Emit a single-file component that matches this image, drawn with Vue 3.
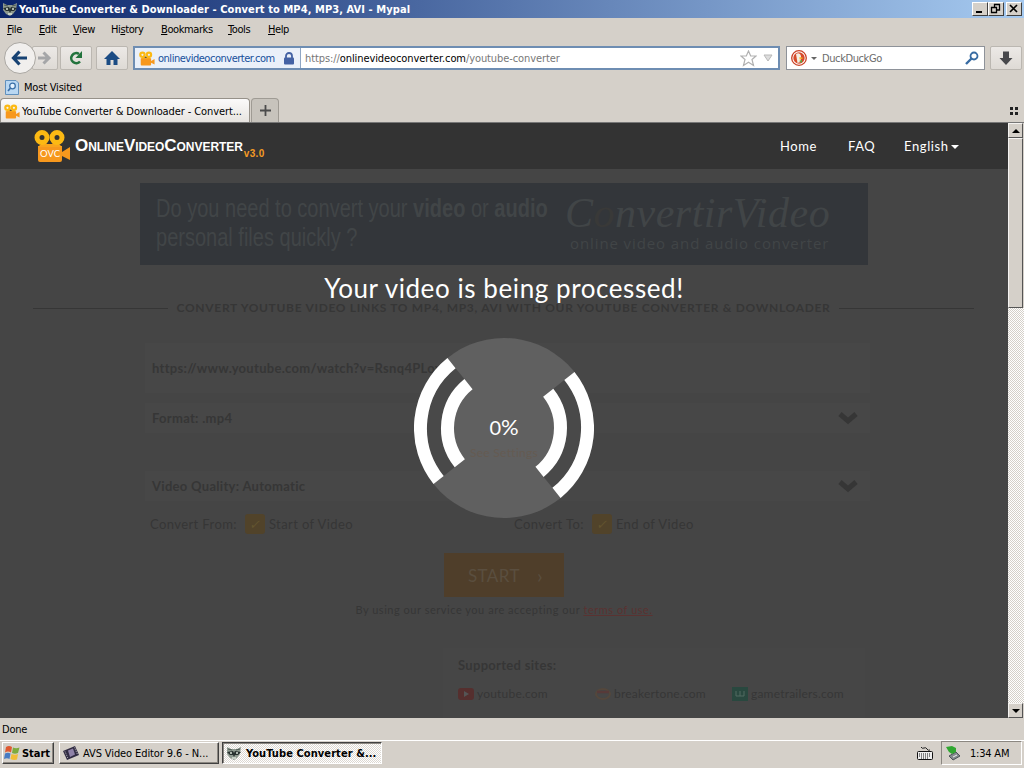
<script setup>
const menus = [
  { pre: '', key: 'F', post: 'ile', width: 32 },
  { pre: '', key: 'E', post: 'dit', width: 34 },
  { pre: '', key: 'V', post: 'iew', width: 38 },
  { pre: 'Hi', key: 's', post: 'tory', width: 50 },
  { pre: '', key: 'B', post: 'ookmarks', width: 67 },
  { pre: '', key: 'T', post: 'ools', width: 40 },
  { pre: '', key: 'H', post: 'elp', width: 40 },
]

const arcs = [
  { d: 'M-44 -54.4A70 70 0 0 0 -54.8 43.6', color: '#494949', size: 14 },
  { d: 'M-52.5 -64.9A83.5 83.5 0 0 0 -65.4 52', color: '#fff', size: 13 },
  { d: 'M-35.5 -43.9A56.5 56.5 0 0 0 -44.2 35.2', color: '#fff', size: 13 },
]
</script>

<template>
  <div class="screen">
    <svg class="defs" width="0" height="0">
      <symbol id="camera" viewBox="0 0 37 34">
        <path d="M4 17H28V23L36 18V31L28 27V31Q28 33 26 33H6Q4 33 4 31Z" fill="#f7981d" />
        <path d="M8 14H24L28 18H4Z" fill="#f9a51c" />
        <path d="M12 15L15.500 12L19 15Z" fill="#333" />
        <circle cx="8" cy="8.500" r="5" fill="none" stroke="#fcb913" stroke-width="5" />
        <circle cx="23" cy="8.500" r="5" fill="none" stroke="#fcb913" stroke-width="5" />
      </symbol>
      <symbol id="raccoon" viewBox="0 0 16 16">
        <path d="M1 2L5 4H11L15 2L14 9L11 13L8 15L4 13L1 9Z" fill="#8d998f" />
        <path d="M1 7L7 6L8 8L9 6L15 7L12 10H9L8 12L7 10H4Z" fill="#27312f" />
        <path d="M4 8H6M10 8H12M6 13H10" stroke="#d9e2d7" stroke-width="1.3" />
        <path d="M2 4L6 5M14 4L10 5" stroke="#4f5c54" />
      </symbol>
    </svg>

    <header class="titlebar">
      <svg width="16" height="16"><use href="#raccoon" /></svg>
      <span class="title">YouTube Converter &amp; Downloader - Convert to MP4, MP3, AVI - Mypal</span>
      <div class="window-btns">
        <i><svg width="13" height="11"><path d="M3 9H9" stroke="#000" stroke-width="2" /></svg></i>
        <i><svg width="13" height="11"><path d="M5 1.5H11M5.500 1V4M10.500 1V7H8M2 4.500H8M2.500 4V9.500H7.500V4" fill="none" stroke="#000" stroke-width="1.300" /></svg></i>
        <i class="close"><svg width="13" height="11"><path d="M3 2L10 9M10 2L3 9" stroke="#000" stroke-width="1.7" /></svg></i>
      </div>
    </header>

    <nav class="menubar">
      <span v-for="m in menus" :key="m.key + m.post" :style="{ width: m.width + 'px' }">{{ m.pre }}<u>{{ m.key }}</u>{{ m.post }}</span>
    </nav>

    <div class="toolbar">
      <div class="back">
        <svg width="30" height="30" viewBox="0 0 30 30"><path d="M8.500 15H22M14.500 8.500L8.500 15L14.500 21.500" fill="none" stroke="#174273" stroke-width="3.200" /></svg>
      </div>
      <div class="tool forward">
        <svg width="22" height="22" viewBox="0 0 22 22"><path d="M4 11H14M9.500 5.500L15 11L9.500 16.500" fill="none" stroke="#a5a6a8" stroke-width="3" /></svg>
      </div>
      <div class="tool reload">
        <svg width="16" height="16" viewBox="0 0 16 16"><path d="M12 11.500A5 5 0 1 1 11 4" fill="none" stroke="#23733d" stroke-width="2.600" /><path d="M14 1V8H7.500Z" fill="#23733d" /></svg>
      </div>
      <div class="tool home">
        <svg width="16" height="16" viewBox="0 0 16 16"><path d="M8 1L16 9H13.500V15H9.500V10H6.500V15H2.500V9H0Z" fill="#1c4c84" /></svg>
      </div>
      <div class="urlbar">
        <div class="identity">
          <svg width="16" height="15"><use href="#camera" /></svg>
          <span>onlinevideoconverter.com</span>
          <svg width="12" height="13" viewBox="0 0 12 13"><path d="M3 6V4A3 3 0 0 1 9 4V6" fill="none" stroke="#4462a4" stroke-width="1.800" /><rect x="1" y="5.500" width="10" height="7" rx="1" fill="#4462a4" /></svg>
        </div>
        <div class="url">https://<b>onlinevideoconverter.com</b>/youtube-converter</div>
        <svg class="star" width="17" height="17" viewBox="0 0 17 17"><path d="M8.500 1L10.700 6H16L12 9.500L13.500 15.500L8.500 12.300L3.500 15.500L5 9.500L1 6H6.300Z" fill="#fff" stroke="#b1b1b1" stroke-width="1.200" /></svg>
        <svg class="drop" width="10" height="8" viewBox="0 0 10 8"><path d="M1 1H9L5 7Z" fill="#ddd" stroke="#b9b9b9" /></svg>
      </div>
      <div class="search">
        <svg width="16" height="16" viewBox="0 0 16 16"><circle cx="8" cy="8" r="7.300" fill="#fff" stroke="#ca4125" stroke-width="1.300" /><circle cx="8" cy="8" r="5.700" fill="#d64b2b" /><path d="M5 4Q9 2 10 6L9.500 12L6.500 13Z" fill="#f5eee2" /><path d="M8.500 7L12.500 8L8.500 9.500Z" fill="#f5bd2d" /><path d="M8 11L11 10V13Z" fill="#58a944" /></svg>
        <svg class="caret" width="6" height="3" viewBox="0 0 6 3"><path d="M0 0H6L3 3Z" fill="#666" /></svg>
        <span>DuckDuckGo</span>
        <svg width="14" height="14" viewBox="0 0 14 14"><circle cx="9" cy="5" r="3.500" fill="none" stroke="#376ba2" stroke-width="1.800" /><path d="M6.500 7.500L1 13" stroke="#376ba2" stroke-width="2.400" /></svg>
      </div>
      <div class="tool download">
        <svg width="14" height="15" viewBox="0 0 14 15"><path d="M4 0.500H10V7H13.500L7 14L0.500 7H4Z" fill="#48494c" /></svg>
      </div>
    </div>

    <div class="bookmarks">
      <svg width="14" height="15" viewBox="0 0 14 15"><path d="M.5 .5H11L13.500 3V14.500H.5Z" fill="#b9d7f2" stroke="#6190bd" /><circle cx="7.500" cy="6" r="2.800" fill="#e5f3ff" stroke="#3b70a8" stroke-width="1.300" /><path d="M5.500 8L3 11" stroke="#3b70a8" stroke-width="1.700" /></svg>
      <span>Most Visited</span>
    </div>

    <div class="tabs">
      <div class="tab">
        <svg width="16" height="15"><use href="#camera" /></svg>
        <span>YouTube Converter &amp; Downloader - Convert...</span>
      </div>
      <div class="new-tab">
        <svg width="11" height="11"><path d="M5.500 0V11M0 5.500H11" stroke="#4b4b4b" stroke-width="1.800" /></svg>
      </div>
      <svg class="tab-grid" width="9" height="9"><path d="M1 1.500H4M6 1.500H9M1 6.500H4M6 6.500H9" stroke="#222" stroke-width="3" /></svg>
    </div>

    <div class="viewport">
      <main class="page">
        <div class="site-header">
          <div class="logo">
            <svg width="37" height="34"><use href="#camera" /><text x="6" y="27.500" class="ovc">OVC</text></svg>
            <span class="brand">OnlineVideoConverter</span>
            <span class="version">v3.0</span>
          </div>
          <div class="site-nav">
            <span>Home</span>
            <span>FAQ</span>
            <span>English<i></i></span>
          </div>
        </div>

        <div class="content">
          <div class="banner">
            <p class="pitch">
              <span>Do you need to convert your <b>video</b> or <b>audio</b></span>
              <span>personal files quickly ?</span>
            </p>
            <div class="convertir">
              <em>C<span>o</span>nvertirVideo</em>
              <span class="tagline">online video and audio converter</span>
            </div>
          </div>

          <div class="heading">
            <hr>
            <h1>CONVERT YOUTUBE VIDEO LINKS TO MP4, MP3, AVI WITH OUR YOUTUBE CONVERTER &amp; DOWNLOADER</h1>
            <hr>
          </div>

          <div class="form">
            <div class="field link"><span>https://www.youtube.com/watch?v=Rsnq4PLoveks</span></div>
            <div class="field format">
              <span>Format: .mp4</span>
              <svg width="20" height="14" viewBox="0 0 20 14"><path d="M2 3L10 10L18 3" fill="none" stroke="#363636" stroke-width="5" /></svg>
            </div>
            <div class="field quality">
              <span>Video Quality: Automatic</span>
              <svg width="20" height="14" viewBox="0 0 20 14"><path d="M2 3L10 10L18 3" fill="none" stroke="#363636" stroke-width="5" /></svg>
            </div>
            <div class="range">
              <div class="from"><span class="label">Convert From:</span><i>✓</i><span>Start of Video</span></div>
              <div class="to"><span class="label">Convert To:</span><i>✓</i><span>End of Video</span></div>
            </div>
          </div>

          <div class="start"><span>START</span><small>›</small></div>
          <p class="terms">By using our service you are accepting our <u>terms of use.</u></p>

          <div class="sites">
            <h2>Supported sites:</h2>
            <div class="site-list">
              <div><svg width="16" height="14" viewBox="0 0 16 14"><rect y="1" width="16" height="12" rx="3" fill="#552f2e" /><path d="M6 4L11 7L6 10Z" fill="#555" /></svg><span>youtube.com</span></div>
              <div><svg width="16" height="14" viewBox="0 0 16 14"><ellipse cx="8" cy="7" rx="7" ry="5" fill="none" stroke="#54473c" stroke-width="2" /><path d="M2 5H14" stroke="#573a39" stroke-width="2.500" /></svg><span>breakertone.com</span></div>
              <div><svg width="16" height="14"><rect width="16" height="14" fill="#29483f" /><path d="M4 4V9H12V4M8 4V9" fill="none" stroke="#526b62" /></svg><span>gametrailers.com</span></div>
            </div>
          </div>
        </div>

        <div class="overlay">
          <h3>Your video is being processed!</h3>
          <div class="progress">
            <svg width="180" height="180" viewBox="-90 -90 180 180">
              <circle r="90" fill="#606060" />
              <g v-for="turn in [0, 180]" :key="turn" :transform="`rotate(${turn})`">
                <path v-for="a in arcs" :key="a.d" :d="a.d" :stroke="a.color" :stroke-width="a.size" fill="none" />
              </g>
            </svg>
            <div class="progress-text">
              <span class="percent"><small>0</small>%</span>
              <span class="settings">See Settings</span>
            </div>
          </div>
        </div>
      </main>

      <aside class="scrollbar">
        <i><svg width="8" height="4"><path d="M4 0L8 4H0Z" /></svg></i>
        <div class="thumb"></div>
        <div class="track"></div>
        <i><svg width="8" height="4"><path d="M0 0H8L4 4Z" /></svg></i>
      </aside>
    </div>

    <div class="status">Done</div>

    <footer class="taskbar">
      <div class="start-menu">
        <svg width="16" height="16" viewBox="0 0 16 16"><path d="M2 2Q5 0 8 2L7 7.500Q4 5.500 1 7.500Z" fill="#df5931" /><path d="M9 2.500Q12 4 15.500 2.500L14 8Q11 9.500 8 8Z" fill="#7dab3d" /><path d="M1 8.500Q4 7 6.500 8.500L5.500 14Q3 12.500 0 14Z" fill="#477bc3" /><path d="M7.500 9Q11 10.500 14 9L13 14.500Q10 15.500 6.500 14Z" fill="#f1bd36" /></svg>
        <b>Start</b>
      </div>
      <div class="task avs">
        <svg width="16" height="16" viewBox="0 0 16 16"><path d="M0 6L12 1L16 10L4 15Z" fill="#312c43" /><path d="M5 5.500L10 3.500L12 9.500L7 12Z" fill="#8f82a8" /><path d="M2 6.500L5 13.500M11.500 2.500L14.500 9.500" stroke="#b4afb8" stroke-dasharray="1 1" /></svg>
        <span>AVS Video Editor 9.6 - N...</span>
      </div>
      <div class="task active">
        <svg width="16" height="16"><use href="#raccoon" /></svg>
        <b>YouTube Converter &amp;...</b>
      </div>
      <svg class="keyboard" width="16" height="15" viewBox="0 0 16 15"><path d="M4 1Q5 3 7 2T10 3T13 4" fill="none" stroke="#222" /><rect x=".5" y="5.500" width="15" height="8" rx="1" fill="#eee" stroke="#111" /><path d="M2 8H14M2 10H14M4 12H12" stroke="#111" stroke-dasharray="1 1" /></svg>
      <div class="tray">
        <svg width="16" height="16" viewBox="0 0 16 16"><path d="M4 11L11 7L15 11L8 15Z" fill="#858b8e" stroke="#4b5457" /><path d="M1 2L7 1L11 3V7L7 9L4 7Z" fill="#30a731" /><path d="M8 12L12 10" stroke="#eee" /></svg>
        <span>1:34 AM</span>
      </div>
    </footer>
  </div>
</template>

<style>
body {
  margin: 0;
  overflow: hidden;
}
</style>

<style scoped>
.screen {
  width: 1024px;
  height: 768px;
  display: flex;
  flex-direction: column;
  overflow: hidden;
  background: #d5d0c9;
  font: 11px 'DejaVu Sans Condensed', 'DejaVu Sans', sans-serif;
  font-stretch: condensed;
  letter-spacing: -0.4px;
  color: #000;
  white-space: nowrap;
}

.screen * {
  box-sizing: border-box;
}

.defs {
  position: absolute;
}

svg {
  flex: none;
  display: block;
}

.titlebar {
  height: 18px;
  flex: none;
  display: flex;
  align-items: center;
  padding: 0 2px;
  background: linear-gradient(90deg, #0a246a, #a6caf0);
  color: #fff;
}

.title {
  margin-left: 1px;
  font-weight: bold;
  letter-spacing: 0.08px;
}

.window-btns {
  display: flex;
  margin-left: auto;
}

.window-btns i {
  width: 16px;
  height: 14px;
  border: 1px solid;
  border-color: #fff #404040 #404040 #fff;
  background: #d5d0c9;
}

.window-btns .close {
  margin-left: 2px;
}

.menubar {
  height: 23px;
  flex: none;
  display: flex;
  align-items: center;
  padding-left: 7px;
}

.toolbar {
  height: 34px;
  flex: none;
  display: flex;
  align-items: center;
}

.back {
  width: 32px;
  height: 32px;
  flex: none;
  margin-left: 4px;
  border: 1px solid #aaa7a2;
  border-radius: 50%;
  background: #f1efed;
  z-index: 1;
}

.tool {
  height: 24px;
  flex: none;
  display: flex;
  align-items: center;
  justify-content: center;
  border: 1px solid #bbb7b1;
  border-radius: 2px;
  background: linear-gradient(#ece9e6, #dedad5);
}

.forward {
  width: 26px;
  margin-left: -4px;
}

.reload {
  width: 32px;
  margin-left: 2px;
}

.home {
  width: 32px;
  margin-left: 4px;
}

.urlbar {
  width: 647px;
  height: 24px;
  display: flex;
  align-items: center;
  margin-left: 5px;
  border: 2px solid #6e8db2;
  background: #fff;
}

.identity {
  width: 166px;
  height: 20px;
  flex: none;
  display: flex;
  align-items: center;
  padding-left: 4px;
  border-right: 1px solid #8fa6c4;
  background: #eaf0f9;
  color: #174f9c;
}

.identity span {
  width: 125px;
  margin-left: 3px;
  letter-spacing: -0.48px;
}

.url {
  margin-left: 4px;
  color: #777;
  letter-spacing: -0.09px;
}

.url b {
  color: #000;
  font-weight: normal;
}

.star {
  margin-left: auto;
}

.drop {
  margin: 0 5px 0 6px;
}

.search {
  width: 199px;
  height: 24px;
  display: flex;
  align-items: center;
  margin-left: 6px;
  padding: 0 5px 0 4px;
  border: 1px solid #8e9299;
  background: #fff;
  color: #6b6b6b;
}

.caret {
  margin: 0 5px 0 4px;
}

.search span {
  flex: 1;
}

.download {
  width: 32px;
  margin-left: 5px;
}

.bookmarks {
  height: 24px;
  flex: none;
  display: flex;
  align-items: center;
  gap: 5px;
  padding-left: 5px;
  letter-spacing: -0.2px;
}

.tabs {
  height: 24px;
  flex: none;
  display: flex;
  align-items: flex-end;
  border-bottom: 1px solid #777;
}

.tab {
  width: 250px;
  height: 24px;
  display: flex;
  align-items: center;
  gap: 2px;
  padding: 2px 0 0 3px;
  border: 1px solid #969189;
  border-bottom: 0;
  border-radius: 4px 4px 0 0;
  background: linear-gradient(#fbfafa, #e7e4e0);
  letter-spacing: -0.1px;
}

.new-tab {
  width: 28px;
  height: 24px;
  display: flex;
  align-items: center;
  justify-content: center;
  margin-left: 1px;
  border: 1px solid #9f9b94;
  border-bottom: 0;
  border-radius: 4px 4px 0 0;
  background: #c7c3bc;
}

.tab-grid {
  margin: 0 6px 6px auto;
}

.viewport {
  height: 595px;
  flex: none;
  display: flex;
}

.page {
  width: 1008px;
  position: relative;
  overflow: hidden;
  background: #454545;
  font-family: Lato, sans-serif;
  letter-spacing: 0;
}

.site-header {
  height: 46px;
  display: flex;
  justify-content: space-between;
  background: #333;
  color: #fff;
}

.logo {
  display: flex;
  align-items: center;
  padding-left: 34px;
}

.ovc {
  font: 9.5px Lato, sans-serif;
  fill: #fff;
}

.brand {
  margin-left: 4px;
  font: bold 17px 'Liberation Sans', sans-serif;
  font-variant: small-caps;
  letter-spacing: -0.05px;
}

.version {
  padding-top: 15px;
  margin-left: 1px;
  color: #f49a25;
  font: bold 10px 'Liberation Sans', sans-serif;
  letter-spacing: 0.3px;
}

.site-nav {
  width: 228px;
  display: flex;
  align-items: center;
  font-size: 13px;
  letter-spacing: 0.6px;
}

.site-nav span:nth-child(1) {
  width: 68px;
}

.site-nav span:nth-child(2) {
  width: 56px;
}

.site-nav i {
  display: inline-block;
  margin-left: 2px;
  vertical-align: 2px;
  border: 4px solid transparent;
  border-top-color: #fff;
  border-bottom: 0;
}

.content {
  display: flex;
  flex-direction: column;
  padding-top: 14px;
  color: #363636;
}

.banner {
  width: 728px;
  height: 82px;
  display: flex;
  margin-left: 140px;
  background: #33363a;
  color: #414547;
}

.pitch {
  width: 409px;
  flex: none;
  margin: 11px 0 0 16px;
  font: 26px/29px 'Liberation Sans', sans-serif;
}

.pitch span {
  display: block;
  width: max-content;
  transform: scaleX(0.77);
  transform-origin: left;
}

.convertir {
  display: flex;
  flex-direction: column;
  padding-top: 8px;
}

.convertir em {
  font: italic 42px/45px 'Liberation Serif', serif;
  letter-spacing: 0.5px;
}

.convertir em span {
  color: #393938;
}

.tagline {
  margin-left: 5px;
  font: 15px/15px 'Open Sans', sans-serif;
  letter-spacing: 0.9px;
}

.heading {
  height: 16px;
  display: flex;
  align-items: center;
  justify-content: space-between;
  margin: 35px 34px 0 33px;
}

.heading hr {
  width: 135px;
  margin: 0;
  border: 0;
  border-top: 1px solid #363636;
}

.heading h1 {
  margin: 0;
  font-size: 12px;
  font-weight: bold;
  line-height: 14px;
  letter-spacing: 0.68px;
}

.form {
  width: 725px;
  display: flex;
  flex-direction: column;
  margin: 27px 0 0 145px;
  font-size: 13px;
  font-weight: bold;
  letter-spacing: 0.3px;
}

.field {
  display: flex;
  align-items: center;
  justify-content: space-between;
  padding: 0 12px 0 7px;
  background: #474747;
}

.link {
  height: 50px;
}

.format {
  height: 30px;
  margin-top: 10px;
}

.quality {
  height: 30px;
  margin-top: 38px;
}

.range {
  height: 20px;
  display: flex;
  margin: 13px 0 0 5px;
  font-weight: normal;
  line-height: 20px;
  letter-spacing: 0.4px;
}

.range div {
  display: flex;
}

.range i {
  width: 20px;
  height: 20px;
  margin: 0 4px 0 8px;
  border-radius: 3px;
  background: #51432a;
  color: #62542f;
  text-align: center;
}

.from {
  width: 364px;
}

.start {
  width: 120px;
  height: 44px;
  display: flex;
  align-items: center;
  gap: 17px;
  margin: 19px 0 0 444px;
  padding-left: 24px;
  background: #4f3e2a;
  color: #5a4e3f;
  font-size: 17px;
  letter-spacing: 0.4px;
}

.start small {
  font-size: 20px;
}

.terms {
  width: 1008px;
  margin: 5px 0 0;
  text-align: center;
  font-size: 11px;
  line-height: 16px;
  letter-spacing: 0.53px;
}

.terms u {
  color: #5a3231;
}

.sites {
  width: 422px;
  height: 90px;
  margin: 30px 0 0 443px;
  padding: 9px 15px;
  background: #464646;
}

.sites h2 {
  margin: 0;
  font-size: 13px;
  line-height: 16px;
  letter-spacing: 0.3px;
}

.site-list {
  display: flex;
  margin-top: 14px;
  font-size: 12px;
  line-height: 14px;
  letter-spacing: 0.2px;
}

.site-list div {
  width: 137px;
  flex: none;
  display: flex;
  gap: 3px;
}

.overlay {
  position: absolute;
  inset: 0;
  display: flex;
  flex-direction: column;
  align-items: center;
  color: #fff;
}

.overlay h3 {
  margin: 148px 0 0;
  font-size: 26px;
  font-weight: normal;
  line-height: 34px;
  letter-spacing: 0.58px;
}

.progress {
  position: relative;
  margin-top: 33px;
}

.progress-text {
  position: absolute;
  inset: 0;
  display: flex;
  flex-direction: column;
  align-items: center;
  padding-top: 75px;
}

.percent {
  line-height: 28px;
  font-size: 22px;
}

.percent small {
  font-size: 20px;
}

.settings {
  margin-top: 4px;
  font-size: 12px;
  line-height: 15px;
  letter-spacing: 0.3px;
  color: #655b52;
}

.scrollbar {
  width: 16px;
  display: flex;
  flex-direction: column;
}

.scrollbar i,
.thumb {
  width: 15px;
  flex: none;
  border: 1px solid;
  border-color: #f5f3f1 #555 #555 #f5f3f1;
  background: #d5d0c9;
}

.scrollbar i {
  height: 15px;
  display: flex;
  align-items: center;
  justify-content: center;
}

.thumb {
  height: 170px;
}

.track {
  flex: 1;
  background: repeating-conic-gradient(#fff 0 25%, #d5d0c9 0 50%) 0 0 / 2px 2px;
}

.status {
  height: 22px;
  flex: none;
  padding-left: 2px;
  line-height: 23px;
  letter-spacing: -0.2px;
}

.taskbar {
  height: 28px;
  flex: none;
  display: flex;
  align-items: center;
  padding: 0 0 3px 2px;
  border-top: 1px solid #fff;
}

.start-menu,
.task {
  height: 22px;
  flex: none;
  display: flex;
  align-items: center;
  border: 1px solid;
  border-color: #fff #404040 #404040 #fff;
  box-shadow: inset -1px -1px #8b8781;
}

.start-menu {
  width: 52px;
  gap: 2px;
  padding-left: 1px;
  letter-spacing: -0.05px;
}

.task {
  width: 160px;
  gap: 4px;
  margin-left: 5px;
  padding-left: 3px;
  letter-spacing: -0.1px;
}

.task.active {
  margin-left: 3px;
  border-color: #404040 #fff #fff #404040;
  box-shadow: inset 1px 1px #8b8781;
  background: repeating-conic-gradient(#fff 0 25%, #dcd8d2 0 50%) 0 0 / 2px 2px;
  letter-spacing: 0.08px;
}

.keyboard {
  margin-left: auto;
}

.tray {
  width: 81px;
  height: 24px;
  display: flex;
  align-items: center;
  gap: 9px;
  margin: 0 2px 0 8px;
  padding-left: 3px;
  border: 1px solid;
  border-color: #8b8781 #fff #fff #8b8781;
  letter-spacing: -0.2px;
}
</style>
